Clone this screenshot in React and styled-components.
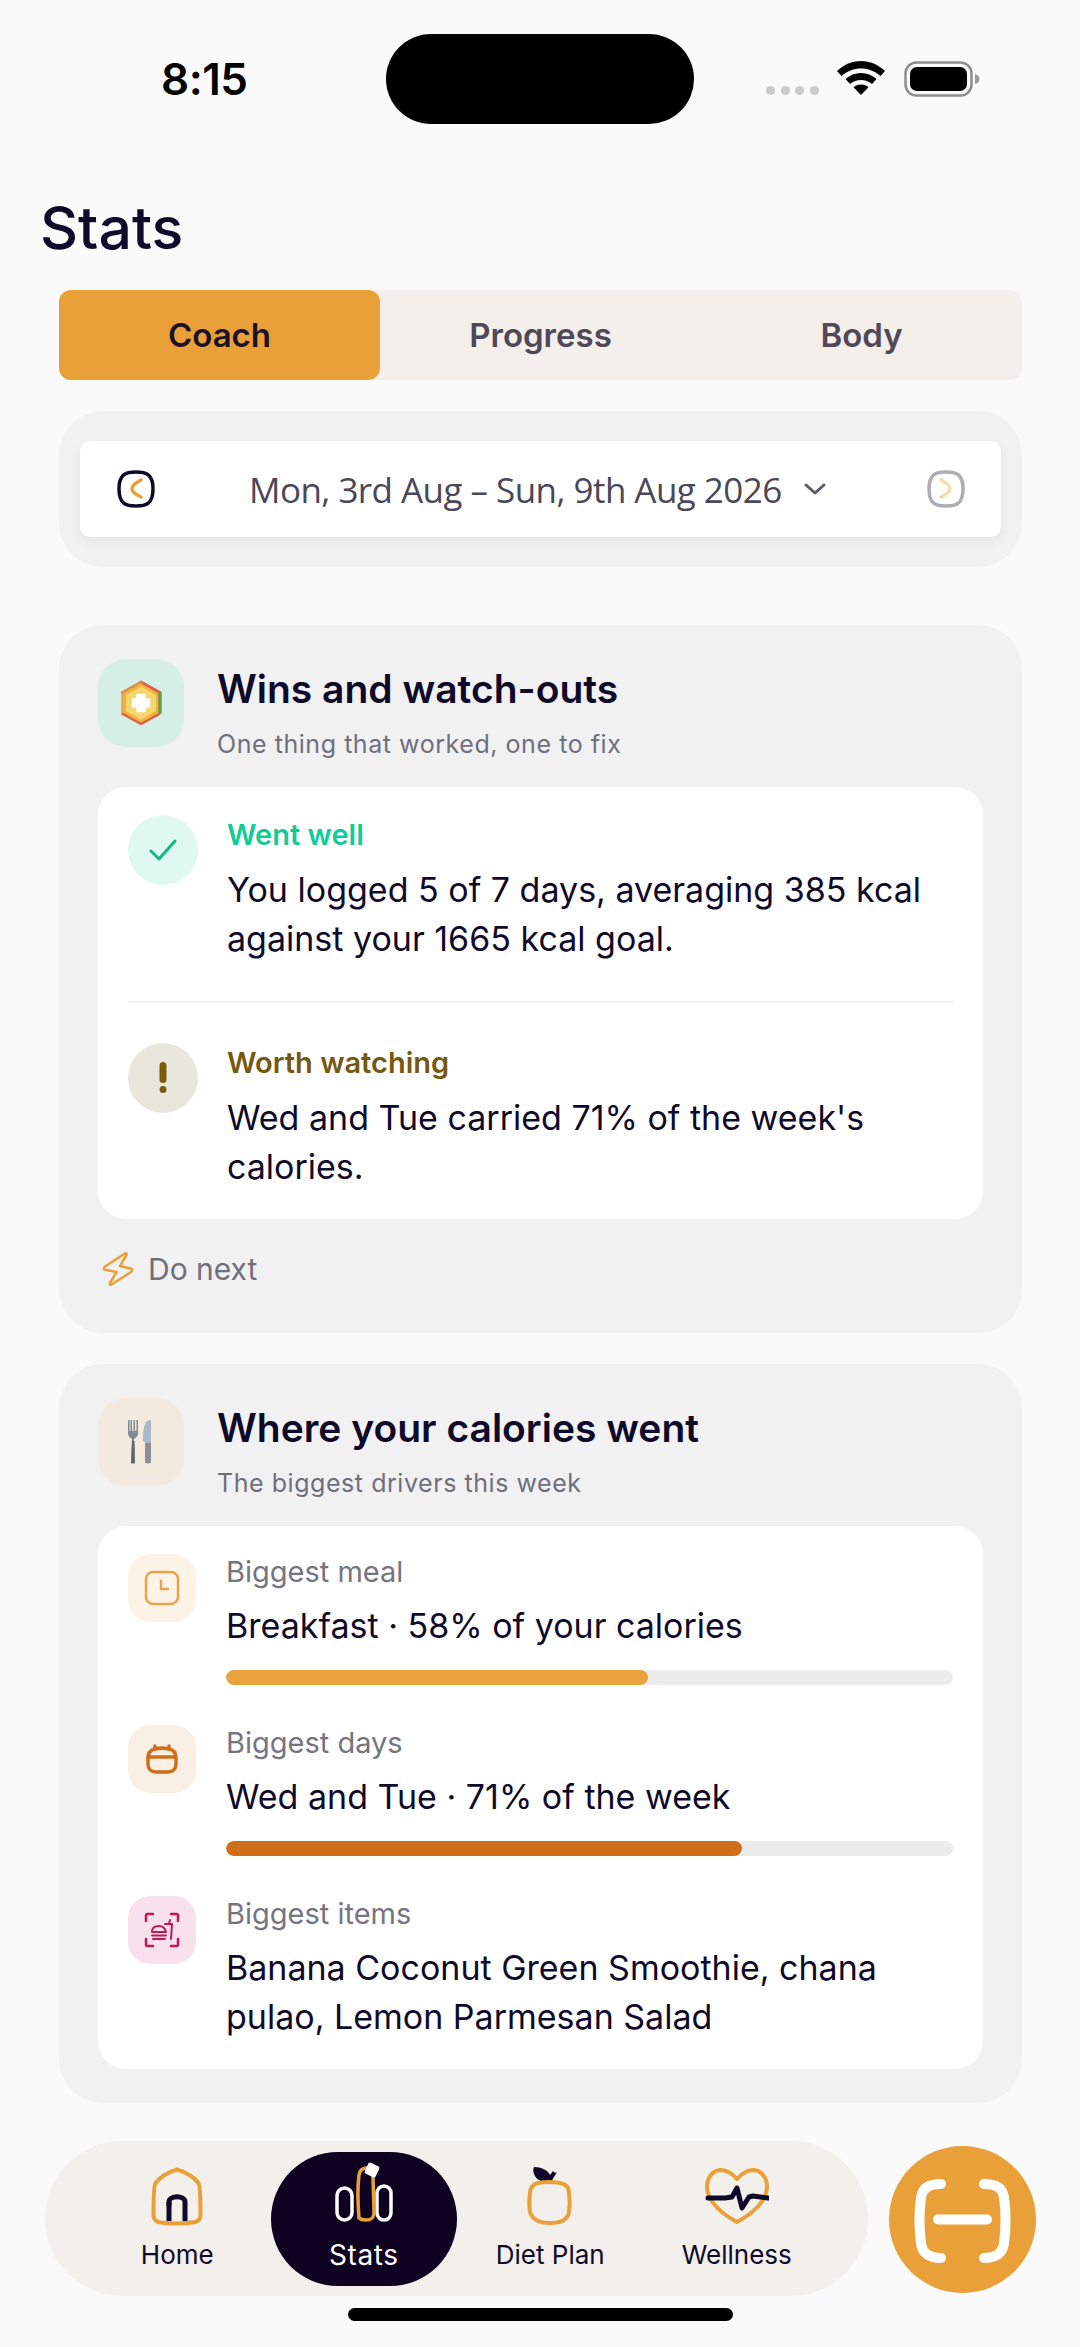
import React from "react";
import styled, { createGlobalStyle } from "styled-components";

const ink = "#0f0a2a";
const orange = "#e9a038";

const GlobalStyle = createGlobalStyle`
  html, body {
    margin: 0;
    padding: 0;
    background: #fafafa;
  }
  * {
    box-sizing: border-box;
  }
`;

const Page = styled.div`
  width: 1080px;
  height: 2347px;
  overflow: hidden;
  background: #fafafa;
  font-family: Inter, "Noto Sans", sans-serif;
  color: ${ink};
`;

const StatusBar = styled.div`
  display: grid;
  grid-template-columns: 386px 308px 1fr;
  height: 192px;
  padding-top: 34px;
  align-items: start;
`;

const Clock = styled.div`
  padding-left: 161px;
  height: 90px;
  line-height: 90px;
  font-size: 44px;
  font-weight: 600;
  letter-spacing: -0.5px;
  color: #000;
`;

const Island = styled.div`
  height: 90px;
  border-radius: 45px;
  background: #000;
`;

const StatusIcons = styled.div`
  display: flex;
  align-items: flex-start;
  padding: 27px 0 0 72px;
`;

const Dots = styled.div`
  display: flex;
  gap: 5.5px;
  margin: 25px 18px 0 0;
`;

const Dot = styled.span`
  width: 9px;
  height: 9px;
  border-radius: 50%;
  background: #cbcbcb;
`;

const Title = styled.h1`
  margin: 0 0 26px 40px;
  height: 72px;
  line-height: 72px;
  font-size: 59px;
  font-weight: 500;
`;

const Content = styled.div`
  padding: 0 58px 0 59px;
`;

const Tabs = styled.div`
  display: grid;
  grid-template-columns: repeat(3, 1fr);
  height: 90px;
  border-radius: 12px;
  background: #f4efea;
`;

const Tab = styled.div`
  display: flex;
  align-items: center;
  justify-content: center;
  border-radius: 12px;
  font-size: 33px;
  font-weight: 600;
  background: ${(p) => (p.$active ? orange : "transparent")};
  color: ${(p) => (p.$active ? "#1a1228" : "#4f4859")};
`;

const DatePanel = styled.div`
  margin-top: 31px;
  padding: 30px 21px;
  height: 156px;
  border-radius: 44px;
  background: #f1f1f2;
`;

const DateBar = styled.div`
  display: flex;
  align-items: center;
  height: 96px;
  padding: 0 36px 0 37px;
  border-radius: 10px;
  background: #fff;
  box-shadow: 0 5px 12px rgba(20, 20, 40, 0.05);
`;

const DateText = styled.div`
  margin-left: 94px;
  font-family: "Open Sans", sans-serif;
  font-size: 35px;
  letter-spacing: -0.55px;
  white-space: nowrap;
  color: #4a4858;
`;

const DateChevron = styled.svg`
  margin-left: 22px;
`;

const NextArrow = styled.svg`
  margin-left: auto;
`;

const Card = styled.section`
  margin-top: ${(p) => p.$top}px;
  padding: 34px 39px;
  border-radius: 44px;
  background: #f1f1f2;
`;

const CardHead = styled.div`
  display: flex;
  gap: 33px;
  height: 128px;
`;

const HeadIcon = styled.div`
  display: flex;
  align-items: center;
  justify-content: center;
  flex: none;
  width: 86px;
  height: 88px;
  border-radius: 28px;
  background: ${(p) => p.$bg};
`;

const HeadText = styled.div`
  padding-top: 2px;
`;

const CardTitle = styled.h2`
  margin: 0;
  height: 56px;
  line-height: 56px;
  font-size: 39px;
  font-weight: 600;
`;

const CardSub = styled.div`
  margin-top: 9px;
  line-height: 36px;
  font-size: 25px;
  letter-spacing: 0.55px;
  color: #6f6f7d;
`;

const Inner = styled.div`
  padding: 28px 30px;
  border-radius: 28px;
  background: #fff;
`;

const Insight = styled.div`
  display: flex;
  gap: 29px;
`;

const Bubble = styled.div`
  display: flex;
  align-items: center;
  justify-content: center;
  flex: none;
  width: 70px;
  height: 70px;
  border-radius: 50%;
  background: ${(p) => p.$bg};
`;

const InsightLabel = styled.div`
  line-height: 40px;
  font-size: 29px;
  font-weight: 600;
  color: ${(p) => p.$color};
`;

const Body = styled.div`
  margin-top: ${(p) => p.$top || 0}px;
  line-height: 49px;
  font-size: 34px;
  color: ${ink};
`;

const Divider = styled.div`
  height: 2px;
  margin: 38px 0 40px;
  background: #efefef;
`;

const DoNext = styled.div`
  display: flex;
  align-items: center;
  gap: 14px;
  height: 40px;
  margin: 30px 0 10px 4px;
  font-size: 30px;
  color: #6f6f7d;
`;

const Driver = styled.div`
  display: flex;
  gap: 30px;
  & + & {
    margin-top: 40px;
  }
`;

const DriverTile = styled.div`
  display: flex;
  align-items: center;
  justify-content: center;
  flex: none;
  width: 68px;
  height: 68px;
  border-radius: 22px;
  background: ${(p) => p.$bg};
`;

const DriverBody = styled.div`
  flex: 1;
  min-width: 0;
`;

const DriverLabel = styled.div`
  line-height: 36px;
  font-size: 29px;
  color: #75757f;
`;

const DriverValue = styled.div`
  margin-top: 16px;
  line-height: 40px;
  font-size: 34px;
`;

const Bar = styled.div`
  height: 15px;
  margin-top: 24px;
  border-radius: 8px;
  overflow: hidden;
  background: #ececec;
`;

const BarFill = styled.div`
  height: 100%;
  border-radius: 8px;
  background: ${(p) => p.$color};
`;

const BottomRow = styled.div`
  display: flex;
  align-items: flex-start;
  gap: 21px;
  margin-top: 38px;
  padding-left: 45px;
`;

const Nav = styled.nav`
  display: grid;
  grid-template-columns: repeat(4, 186.5px);
  width: 823px;
  height: 155px;
  padding: 11px 38px 0 39px;
  border-radius: 78px;
  background: #f3efea;
`;

const NavItem = styled.div`
  display: flex;
  flex-direction: column;
  align-items: center;
  height: 134px;
  padding-top: 10px;
  border-radius: 67px;
  background: ${(p) => (p.$active ? "#0f0220" : "transparent")};
  color: ${(p) => (p.$active ? "#fff" : ink)};
`;

const NavLabel = styled.div`
  margin-top: 11px;
  line-height: 36px;
  font-size: ${(p) => (p.$active ? 28 : 26)}px;
  letter-spacing: ${(p) => (p.$active ? 0.6 : 0)}px;
`;

const Fab = styled.div`
  display: flex;
  flex: none;
  width: 147px;
  height: 147px;
  margin-top: 5px;
  border-radius: 50%;
  background: ${orange};
`;

const HomeIndicator = styled.div`
  width: 385px;
  height: 13px;
  margin: 12px 0 0 348px;
  border-radius: 7px;
  background: #000;
`;

const Wifi = () => (
  <svg width="48" height="34" viewBox="0 0 48 34">
    <path d="M24 0C15 0 7 3.500 0 10l4.500 5C10 10 17 7.500 24 7.500S38 10 43.500 15L48 10C41 3.500 33 0 24 0Z" fill="#000" />
    <path d="M24 12c-6 0-11 2-15.500 6l4.500 5c3-2.700 7-4 11-4s8 1.300 11 4l4.500-5C35 14 30 12 24 12Z" fill="#000" />
    <path d="M24 23.500c-3 0-5.500 1-7.500 2.800L24 34l7.500-7.700c-2-1.800-4.500-2.800-7.500-2.800Z" fill="#000" />
  </svg>
);

const Battery = () => (
  <svg width="76" height="36" viewBox="0 0 76 36" style={{ marginLeft: 19 }}>
    <rect x="1.500" y="1.500" width="66" height="33" rx="11" fill="none" stroke="#8e8e8e" strokeWidth="2.500" />
    <rect x="6" y="6" width="57" height="24" rx="7" fill="#000" />
    <path d="M71 13c3 .6 4.500 2.500 4.500 5s-1.500 4.400-4.500 5Z" fill="#9a9a9a" />
  </svg>
);

const PrevArrow = () => (
  <svg width="38" height="38" viewBox="0 0 38 38" fill="none">
    <path d="M19 2c10 0 17 2 17 17s-7 17-17 17S2 34 2 19 9 2 19 2Z" stroke="#0f0a2a" strokeWidth="3.500" />
    <path d="M24 10c-4 2-9 5-9 9 0 3 5 6 9 8" stroke={orange} strokeWidth="3.500" strokeLinecap="round" />
  </svg>
);

const HexIcon = () => (
  <svg width="46" height="46" viewBox="0 0 46 46">
    <path d="M23 2 42 12.500V33.500L23 44 4 33.500V12.500Z" fill="#f2b23e" stroke="#e8a23a" strokeWidth="1.500" strokeLinejoin="round" />
    <path d="M23 2 42 12.500" stroke="#d9634f" strokeWidth="3" strokeLinecap="round" />
    <path d="M42 12.500V33.500" stroke="#6f9a45" strokeWidth="3.500" />
    <path d="M42 33.500 23 44 4 33.500" stroke="#df5f4a" strokeWidth="2.500" fill="none" strokeLinejoin="round" />
    <path d="M23 2 4 12.500" stroke="#d9904a" strokeWidth="2.500" strokeLinecap="round" />
    <path d="M23 6.500 38 15V31L23 39.500 8 31V15Z" fill="#f5d76e" />
    <path d="M19 14.500h8v4.500h4.500v8H27v4.500h-8V27h-4.500v-8H19Z" fill="#fff" stroke="#fff" strokeWidth="1.500" strokeLinejoin="round" />
  </svg>
);

const CutleryIcon = () => (
  <svg width="28" height="46" viewBox="0 0 28 46">
    <path d="M1 1v13c0 3 2 5 4 6l-1 24c0 1 4 1 4 0L7 20c2-1 4-3 4-6V1h-1.500v11H8V1H6.500v11H5V1H3.500v11H2.500V1Z" fill="#7f8a96" />
    <path d="M5 22h2.500l.5 22H4Z" fill="#5f6670" />
    <path d="M20 2c-3 3-4 10-4 20l2 1v20c0 2 6 2 6 0V1Z" fill="#a9b8c6" />
    <path d="M18 24h6v20h-6Z" fill="#8a8f96" />
  </svg>
);

const Bolt = () => (
  <svg width="32" height="34" viewBox="0 0 32 34" fill="none">
    <path
      d="M23 1.500 3 14.500c-2 1.800-1 3 1 3.500l10.500 2L8 31c-.8 1.700 0 2.200 1.500 1.500L29 20c2-1.500 1.800-2.800-.5-3.500L18 14 24.500 3c.6-1.500 0-2.200-1.500-1.500Z"
      stroke={orange}
      strokeWidth="2.500"
      strokeLinejoin="round"
    />
  </svg>
);

const ClockIcon = () => (
  <svg width="36" height="36" viewBox="0 0 36 36" fill="none" stroke="#e6a44d" strokeWidth="2.500" strokeLinecap="round" strokeLinejoin="round">
    <rect x="2" y="2" width="32" height="32" rx="7" />
    <path d="M17 11v8h7" />
  </svg>
);

const PotIcon = () => (
  <svg width="32" height="30" viewBox="0 0 32 30" fill="none" stroke="#cf6f1c" strokeWidth="3.500" strokeLinecap="round" strokeLinejoin="round">
    <path d="M9 5C4 6 2 9 2 14v6c0 5 3 8 8 8h12c5 0 8-3 8-8v-6c0-5-2-8-7-9-4-1-10-1-14 0Z" />
    <path d="M2.500 13h27" />
    <path d="M9 2v3M23 2v3" />
  </svg>
);

const ScanFoodIcon = () => (
  <svg width="36" height="36" viewBox="0 0 36 36" fill="none" stroke="#c2185b" strokeWidth="2.500" strokeLinecap="round" strokeLinejoin="round">
    <path d="M2 9V3.500C2 2.500 2.500 2 3.500 2H9M27 2h5.500c1 0 1.500.5 1.500 1.500V9M2 27v5.500c0 1 .5 1.500 1.500 1.500H9M27 34h5.500c1 0 1.500-.5 1.500-1.500V27" />
    <path d="M8 20c0-4 3-6 7-6s6 2 7 6Z" strokeWidth="2" />
    <path d="M8 23.500h14M9 27h12" strokeWidth="2" />
    <path d="M21 12h7l-1 15M25 12l1-4" strokeWidth="2" />
  </svg>
);

const HomeIcon = () => (
  <svg width="64" height="64" viewBox="0 0 64 64" fill="none" strokeLinecap="round" strokeLinejoin="round">
    <path d="M24 44v-4c0-7 16-7 16 0v19" stroke={ink} strokeWidth="5" strokeLinecap="butt" transform="translate(0 0)" />
    <path d="M24 40v19" stroke={ink} strokeWidth="5" strokeLinecap="butt" />
    <path
      d="M32 7.500C24 10 15 15 10.500 21 8.500 24 8.500 36 8.500 53c0 4 2 6 5 7 10 2 26 2 37 0 3-1 5-3 5-7 0-17 0-29-2-32C49 15 40 10 32 7.500Z"
      stroke={orange}
      strokeWidth="4"
    />
  </svg>
);

const StatsIcon = () => (
  <svg width="64" height="64" viewBox="0 0 64 64" fill="none" strokeLinecap="round" style={{ overflow: "visible" }}>
    <rect x="5" y="26" width="15" height="32" rx="7.500" stroke="#fff" strokeWidth="3.500" />
    <rect x="45" y="24" width="14" height="34" rx="7" stroke="#fff" strokeWidth="3.500" />
    <path d="M27 56c-1-12-2-28 0-43 .7-5 4-7 8-7 5 1 6 4 6 10l1 34c0 6-2 8-8 8-4 0-6-1-7-2Z" stroke={orange} strokeWidth="3.500" />
    <rect x="34" y="2" width="12" height="12" rx="2" fill="#fff" transform="rotate(25 40 8)" />
  </svg>
);

const DietIcon = () => (
  <svg width="64" height="64" viewBox="0 0 64 64" fill="none">
    <path d="M16 5c7 0 14 3 16 8l3-4 2 2 2-1-6 10c-8 1-15-2-17-8-1-3-1-5 0-7Z" fill={ink} />
    <path
      d="M20 21c6-1 16-1 22 0 6 1 9 5 9 10 1 7 1 13 0 19-1 7-7 11-19 11-12 0-18-4-20-11-1-6-1-12 0-19 0-5 3-9 8-10Z"
      stroke={orange}
      strokeWidth="4"
    />
  </svg>
);

const HeartIcon = () => (
  <svg width="64" height="64" viewBox="0 0 64 64" fill="none" strokeLinecap="round" strokeLinejoin="round">
    <path d="M32 17C26 10 21 8 15 8 7 9 2 16 2 25c0 13 13 26 30 35 17-9 30-22 30-35 0-9-5-16-13-17-6 0-11 2-17 9Z" stroke={orange} strokeWidth="4" />
    <path d="M3 36h17l7-1 5-9 5 20 7-11 4-1 15 2" stroke={ink} strokeWidth="5" />
  </svg>
);

const ScanIcon = () => (
  <svg width="147" height="147" viewBox="0 0 147 147" fill="none" stroke="#fff" strokeWidth="10" strokeLinecap="round">
    <path d="M52 38C40 38 33 42 32 52c-2 14-2 30 0 45 1 10 8 15 20 15" />
    <path d="M95 38c12 0 19 4 20 14 2 14 2 30 0 45-1 10-8 15-20 15" />
    <path d="M49 73.500h49" />
  </svg>
);

const navItems = [
  { label: "Home", Icon: HomeIcon },
  { label: "Stats", Icon: StatsIcon, active: true },
  { label: "Diet Plan", Icon: DietIcon },
  { label: "Wellness", Icon: HeartIcon },
];

const App = () => (
  <Page>
    <GlobalStyle />
    <StatusBar>
      <Clock>8:15</Clock>
      <Island />
      <StatusIcons>
        <Dots>
          <Dot />
          <Dot />
          <Dot />
          <Dot />
        </Dots>
        <Wifi />
        <Battery />
      </StatusIcons>
    </StatusBar>
    <Title>Stats</Title>
    <Content>
      <Tabs>
        <Tab $active>Coach</Tab>
        <Tab>Progress</Tab>
        <Tab>Body</Tab>
      </Tabs>

      <DatePanel>
        <DateBar>
          <PrevArrow />
          <DateText>Mon, 3rd Aug – Sun, 9th Aug 2026</DateText>
          <DateChevron width="22" height="14" viewBox="0 0 22 14" fill="none">
            <path d="M2 3l9 8 9-8" stroke="#5c5a68" strokeWidth="3" strokeLinecap="round" strokeLinejoin="round" />
          </DateChevron>
          <NextArrow width="38" height="38" viewBox="0 0 38 38" fill="none">
            <path d="M19 2c10 0 17 2 17 17s-7 17-17 17S2 34 2 19 9 2 19 2Z" stroke="#aeaeb2" strokeWidth="3.500" />
            <path d="M14 10c4 2 9 5 9 9 0 3-5 6-9 8" stroke="#f5dca8" strokeWidth="3.500" strokeLinecap="round" />
          </NextArrow>
        </DateBar>
      </DatePanel>

      <Card $top={58}>
        <CardHead>
          <HeadIcon $bg="#d5efe7">
            <HexIcon />
          </HeadIcon>
          <HeadText>
            <CardTitle>Wins and watch-outs</CardTitle>
            <CardSub>One thing that worked, one to fix</CardSub>
          </HeadText>
        </CardHead>
        <Inner>
          <Insight>
            <Bubble $bg="#dff8f0">
              <svg width="30" height="24" viewBox="0 0 30 24" fill="none">
                <path d="M3 13l8 8L27 3" stroke="#12b886" strokeWidth="3" strokeLinecap="round" strokeLinejoin="round" />
              </svg>
            </Bubble>
            <div>
              <InsightLabel $color="#10cc96">Went well</InsightLabel>
              <Body $top={10}>
                You logged 5 of 7 days, averaging 385 kcal
                <br />
                against your 1665 kcal goal.
              </Body>
            </div>
          </Insight>
          <Divider />
          <Insight>
            <Bubble $bg="#e9e7dc">
              <svg width="14" height="32" viewBox="0 0 14 32">
                <rect x="3.500" y="0" width="7" height="21" rx="3.500" fill="#7a5c0c" />
                <circle cx="7" cy="27.500" r="3.500" fill="#7a5c0c" />
              </svg>
            </Bubble>
            <div>
              <InsightLabel $color="#75590f">Worth watching</InsightLabel>
              <Body $top={10}>
                Wed and Tue carried 71% of the week's
                <br />
                calories.
              </Body>
            </div>
          </Insight>
        </Inner>
        <DoNext>
          <Bolt />
          Do next
        </DoNext>
      </Card>

      <Card $top={31}>
        <CardHead>
          <HeadIcon $bg="#f3e9df">
            <CutleryIcon />
          </HeadIcon>
          <HeadText>
            <CardTitle>Where your calories went</CardTitle>
            <CardSub>The biggest drivers this week</CardSub>
          </HeadText>
        </CardHead>
        <Inner>
          <Driver>
            <DriverTile $bg="#fdf3e6">
              <ClockIcon />
            </DriverTile>
            <DriverBody>
              <DriverLabel>Biggest meal</DriverLabel>
              <DriverValue>Breakfast · 58% of your calories</DriverValue>
              <Bar>
                <BarFill $color="#eaa23c" style={{ width: "58%" }} />
              </Bar>
            </DriverBody>
          </Driver>
          <Driver>
            <DriverTile $bg="#faefe5">
              <PotIcon />
            </DriverTile>
            <DriverBody>
              <DriverLabel>Biggest days</DriverLabel>
              <DriverValue>Wed and Tue · 71% of the week</DriverValue>
              <Bar>
                <BarFill $color="#d06f1a" style={{ width: "71%" }} />
              </Bar>
            </DriverBody>
          </Driver>
          <Driver>
            <DriverTile $bg="#f8e1ec">
              <ScanFoodIcon />
            </DriverTile>
            <DriverBody>
              <DriverLabel>Biggest items</DriverLabel>
              <Body $top={11}>
                Banana Coconut Green Smoothie, chana
                <br />
                pulao, Lemon Parmesan Salad
              </Body>
            </DriverBody>
          </Driver>
        </Inner>
      </Card>
    </Content>

    <BottomRow>
      <Nav>
        {navItems.map(({ label, Icon, active }) => (
          <NavItem key={label} $active={active}>
            <Icon />
            <NavLabel $active={active}>{label}</NavLabel>
          </NavItem>
        ))}
      </Nav>
      <Fab>
        <ScanIcon />
      </Fab>
    </BottomRow>
    <HomeIndicator />
  </Page>
);

export default App;
